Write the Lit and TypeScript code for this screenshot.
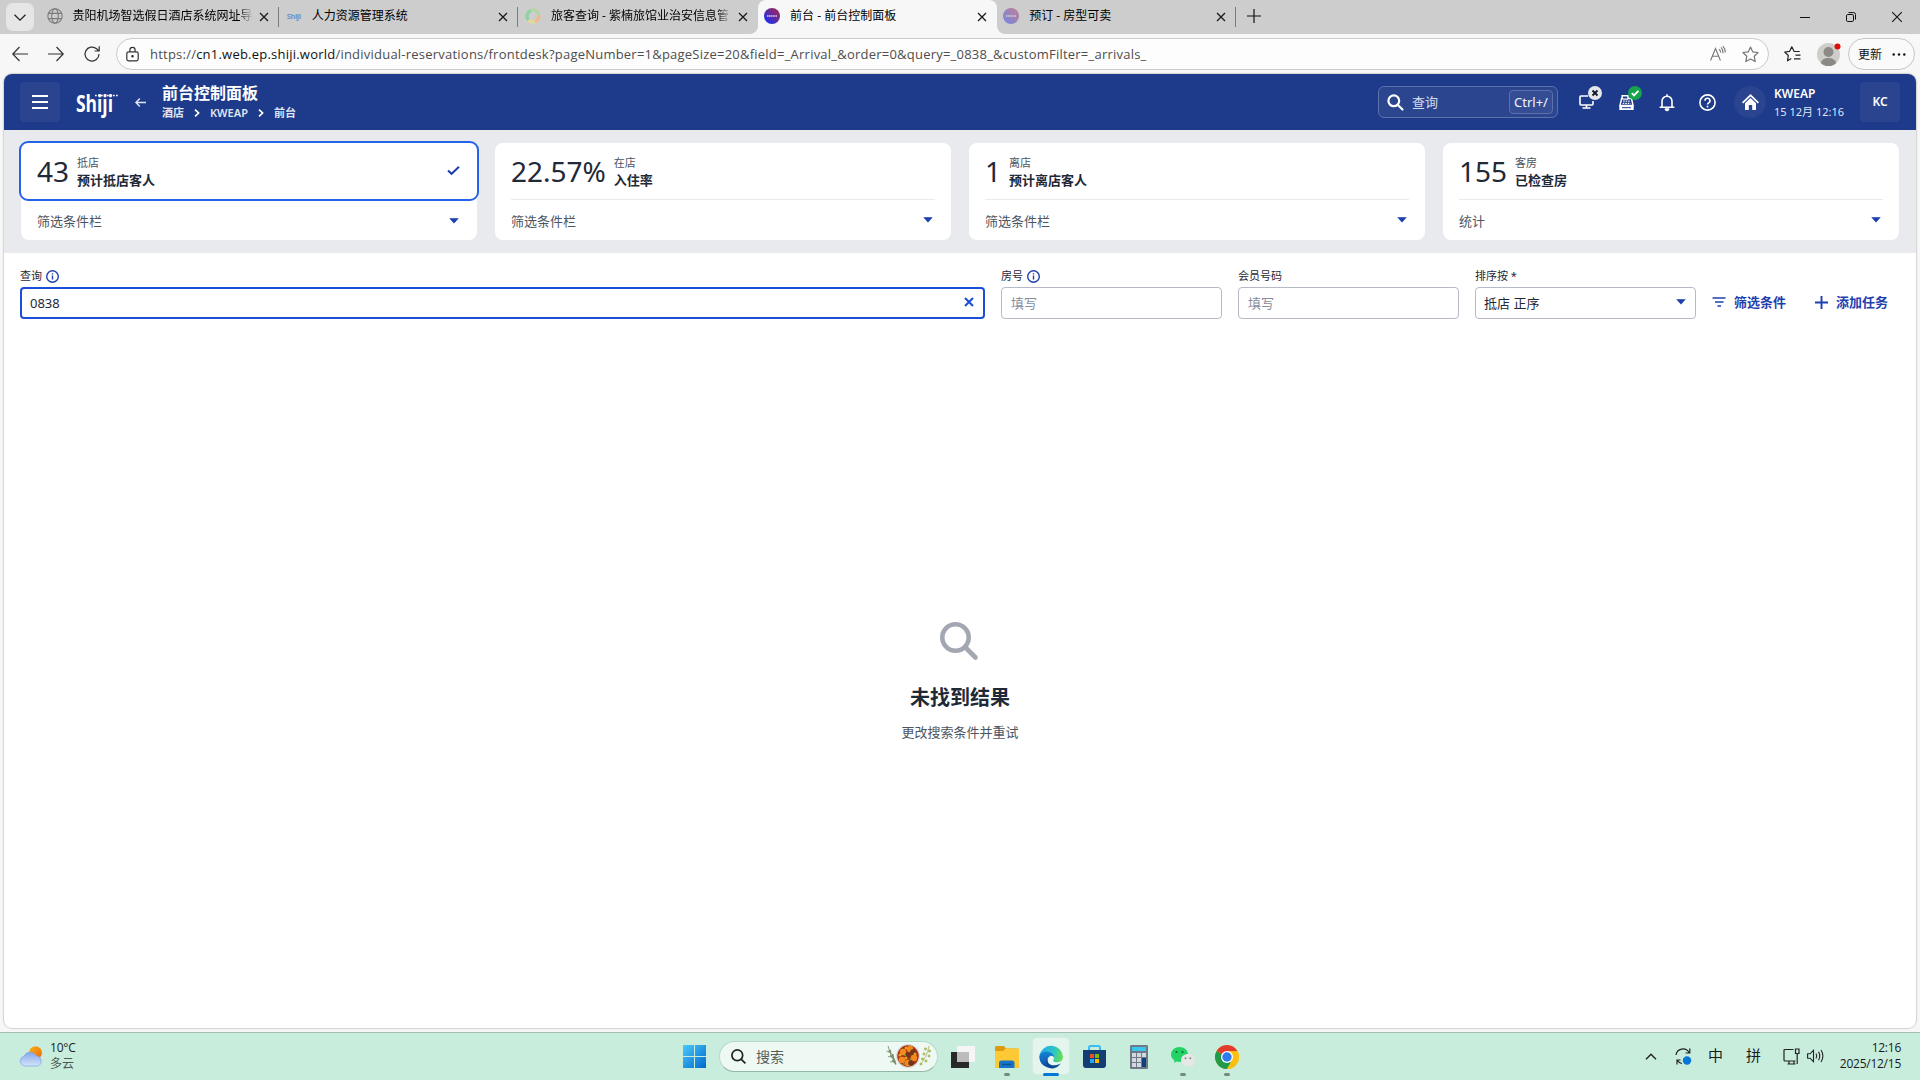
import { LitElement, html, svg, css, nothing } from "lit";
import { customElement, property } from "lit/decorators.js";
import { classMap } from "lit/directives/class-map.js";

const base = css`
  :host { display: block; box-sizing: border-box; font-family: "Noto Sans", "Noto Sans CJK SC", sans-serif; }
  * { box-sizing: border-box; }
  svg { display: block; flex: none; overflow: visible; }
`;

const closeX = (size: number, w: number, color = "#1a1a1a") => html`
  <svg width=${size} height=${size} viewBox="0 0 10 10" fill="none" stroke=${color} stroke-width=${w}>
    <path d="M1 1L9 9M9 1L1 9" />
  </svg>`;

const caret = html`
  <svg width="10" height="6" viewBox="0 0 10 6"><path d="M0.8 0.5H9.2L5 5.2Z" fill="#1e40af" stroke="#1e40af" stroke-width=".6" stroke-linejoin="round" /></svg>`;

const info = html`
  <svg width="13" height="13" viewBox="0 0 13 13" fill="none" stroke="#1e40af" stroke-width="1.4">
    <circle cx="6.5" cy="6.5" r="5.8" /><path d="M6.5 5.6V9.6M6.5 3.2V4.5" />
  </svg>`;

/* ---------- Browser tabs ---------- */
interface Tab { title: string; icon: "globe" | "shiji" | "ring" | "dot" | "dotfaded"; active?: boolean; }

@customElement("browser-tabs")
class BrowserTabs extends LitElement {
  static styles = [base, css`
    .bar { display: flex; height: 34px; background: #cdcdcd; padding-left: 6px; align-items: stretch; }
    .drop { width: 28px; height: 28px; margin-top: 3px; border-radius: 7px; background: #e6e6e6; display: grid; place-items: center; margin-right: 6px; }
    .tab { width: 239.2px; display: flex; align-items: center; padding-left: 6.5px; padding-right: 10px; position: relative; }
    .tab.active { background: #f7f7f7; border-radius: 8px 8px 0 0; }
    .tab.active::before, .tab.active::after { content: ""; position: absolute; bottom: 0; width: 8px; height: 8px; }
    .tab.active::before { left: -8px; background: radial-gradient(circle at 0 0, #cdcdcd 7.6px, #f7f7f7 8.2px); }
    .tab.active::after { right: -8px; background: radial-gradient(circle at 100% 0, #cdcdcd 7.6px, #f7f7f7 8.2px); }
    .fav { width: 16px; height: 16px; margin-right: 10px; margin-top: -2px; display: grid; place-items: center; flex: none; }
    .title { flex: 1; white-space: nowrap; font: 12px/18px "Open Sans", "Noto Sans CJK SC", sans-serif; color: #000; margin-top: -2px; margin-right: 5px; }
    .title.cut { -webkit-mask-image: linear-gradient(90deg, #000 166px, transparent 180px); mask-image: linear-gradient(90deg, #000 166px, transparent 180px); }
    .sep { width: 1px; height: 20px; background: #7c7c7c; margin: 7px 0 0 -1px; }
    .wordmark { font: bold 7.5px/10px "Open Sans", sans-serif; color: #6d8fd0; letter-spacing: -0.4px; }
    .plus { width: 36px; display: grid; place-items: center; margin-top: -3px; }
    .grow { flex: 1; }
    .win { width: 46px; display: grid; place-items: center; }
  `];
  tabs: Tab[] = [
    { title: "贵阳机场智选假日酒店系统网址导", icon: "globe" },
    { title: "人力资源管理系统", icon: "shiji" },
    { title: "旅客查询 - 紫楠旅馆业治安信息管", icon: "ring" },
    { title: "前台 - 前台控制面板", icon: "dot", active: true },
    { title: "预订 - 房型可卖", icon: "dotfaded" },
  ];
  favicon(kind: Tab["icon"]) {
    if (kind === "shiji") return html`<span class="wordmark">Shiji</span>`;
    if (kind === "globe") return html`
      <svg width="16" height="16" viewBox="0 0 16 16" fill="none" stroke="#7b7b7b" stroke-width="1.1">
        <circle cx="8" cy="8" r="7.2" /><ellipse cx="8" cy="8" rx="3.3" ry="7.2" /><path d="M1.4 5.4H14.6M1.4 10.6H14.6" />
      </svg>`;
    if (kind === "ring") return html`
      <svg width="16" height="16" viewBox="0 0 16 16" fill="none" stroke-width="3.2">
        <path d="M3.600 12A5.900 5.900 0 0 1 6 2.400" stroke="#8fd0a4" /><path d="M6 2.400A5.900 5.900 0 0 1 13.900 7.500" stroke="#b2d7a0" />
        <path d="M13.900 7.500A5.900 5.900 0 0 1 10 13.600" stroke="#efb987" /><path d="M10 13.600A5.900 5.900 0 0 1 3.600 12" stroke="#e3d896" />
      </svg>`;
    return html`
      <svg width="16" height="16" viewBox="0 0 16 16" opacity=${kind === "dot" ? 1 : 0.45}>
        <defs><linearGradient id="g" x1="0" y1="1" x2="1" y2="0"><stop offset=".1" stop-color="#1430f5" /><stop offset=".75" stop-color="#8b2673" /></linearGradient></defs>
        <circle cx="8" cy="8" r="8" fill="url(#g)" /><path d="M3 8H13" stroke="#d9c8ec" stroke-width="1.5" stroke-dasharray="1.4 .4" />
      </svg>`;
  }
  render() {
    return html`<div class="bar">
      <div class="drop"><svg width="12" height="7" viewBox="0 0 12 7" fill="none" stroke="#222" stroke-width="1.3"><path d="M.5 .8L6 6.2L11.5 .8" /></svg></div>
      ${this.tabs.map((t, i) => html`
        <div class=${classMap({ tab: true, active: !!t.active })}>
          <span class="fav">${this.favicon(t.icon)}</span>
          <span class=${classMap({ title: true, cut: i === 0 || i === 2 })}>${t.title}</span>
          ${closeX(10, 1.3)}
        </div>
        ${i === 2 || i === 3 ? nothing : html`<div class="sep"></div>`}`)}
      <div class="plus"><svg width="14" height="14" viewBox="0 0 14 14" stroke="#111" stroke-width="1.2"><path d="M7 0V14M0 7H14" /></svg></div>
      <div class="grow"></div>
      <div class="win"><svg width="10" height="10" stroke="#111"><path d="M0 5.500H10" /></svg></div>
      <div class="win"><svg width="10" height="10" viewBox="0 0 10 10" fill="none" stroke="#111"><rect x=".5" y="2.5" width="7" height="7" rx="1.3" /><path d="M2.5 .6H7.6A1.9 1.9 0 0 1 9.5 2.5V7.6" /></svg></div>
      <div class="win">${closeX(12, 0.9, "#111")}</div>
    </div>`;
  }
}

/* ---------- Browser toolbar ---------- */
@customElement("browser-toolbar")
class BrowserToolbar extends LitElement {
  static styles = [base, css`
    .bar { display: flex; align-items: center; height: 40px; background: #f7f7f7; padding: 0 4px 0 12px; }
    .nav { display: flex; gap: 20px; width: 104px; }
    .url { display: flex; align-items: center; width: 1653px; height: 32px; border: 1px solid #cacaca; border-radius: 16px; background: #fdfdfd; padding: 0 9px 0 9px; }
    .text { margin-left: 11px; flex: 1; font: 13px/20px "Open Sans", sans-serif; color: #4d4d4d; white-space: nowrap; letter-spacing: 0.225px; }
    .text b { font-weight: 400; color: #111; }
    .acts { display: flex; gap: 16px; align-items: center; }
    .fav { margin-left: 15px; }
    .user { margin-left: 16px; }
    .upd { margin-left: 8px; width: 67px; height: 32px; border: 1px solid #c6c6c6; border-radius: 16px; display: flex; align-items: center; justify-content: space-between; padding: 0 8px 0 9px; font: 12px/18px "Noto Sans CJK SC", sans-serif; color: #111; background: #fafafa; }
  `];
  render() {
    return html`<div class="bar">
      <div class="nav">
        <svg width="16" height="16" viewBox="0 0 16 16" fill="none" stroke="#333" stroke-width="1.2"><path d="M16 8H.8M7.5 1L.8 8L7.5 15" /></svg>
        <svg width="16" height="16" viewBox="0 0 16 16" fill="none" stroke="#333" stroke-width="1.2"><path d="M0 8H15.2M8.5 1L15.2 8L8.5 15" /></svg>
        <svg width="16" height="16" viewBox="0 0 16 16" fill="none" stroke="#333" stroke-width="1.2"><path d="M15 8A7 7 0 1 1 12.6 2.8L15 5M15.2 .3V5H10.6" /></svg>
      </div>
      <div class="url">
        <svg width="13" height="15" viewBox="0 0 13 15" fill="none" stroke="#333" stroke-width="1.2"><rect x=".8" y="4.8" width="11.4" height="9" rx="1.8" /><path d="M3.9 4.8V3A2.6 2.6 0 0 1 9.1 3V4.8" /><circle cx="6.5" cy="9.3" r=".7" fill="#333" /></svg>
        <span class="text">https://<b>cn1.web.ep.shiji.world</b>/individual-reservations/frontdesk?pageNumber=1&amp;pageSize=20&amp;field=_Arrival_&amp;order=0&amp;query=_0838_&amp;customFilter=_arrivals_</span>
        <div class="acts">
          <svg width="16" height="16" viewBox="0 0 16 16" fill="none" stroke="#777" stroke-width="1.1"><path d="M.6 14.5L5.5 2.5L10.4 14.5M2.3 10.3H8.7M9 3.2A4 4 0 0 1 10.6 6.6M11 1.400A7.5 7.5 0 0 1 13 7.2M12.800 .2A9 9 0 0 1 15.4 6.500" /></svg>
          <svg width="17" height="17" viewBox="0 0 17 17" fill="none" stroke="#777" stroke-width="1.2" stroke-linejoin="round"><path d="M8.5 1L10.8 5.9L16.1 6.5L12.2 10.2L13.2 15.6L8.5 12.9L3.8 15.6L4.8 10.2L.9 6.5L6.2 5.9Z" /></svg>
        </div>
      </div>
      <svg class="fav" width="17" height="16" viewBox="0 0 17 16" fill="none" stroke="#222" stroke-width="1.2" stroke-linejoin="round"><path d="M15.8 5.5L10 5.3L7.8 .8L5.6 5.3L.7 6L4.3 9.5L3.5 14.8L7.3 12.6M11.5 9.2H16.5M10 12.8H16.5" /></svg>
      <svg class="user" width="23" height="23" viewBox="0 0 23 23">
        <clipPath id="c"><circle cx="11.5" cy="11.5" r="11.5" /></clipPath>
        <circle cx="11.5" cy="11.5" r="11.5" fill="#cfcdca" /><g clip-path="url(#c)" fill="#8d8a86"><circle cx="11.5" cy="9" r="5" /><ellipse cx="11.5" cy="20" rx="7.5" ry="5" /></g>
        <circle cx="20.5" cy="3.5" r="3" fill="#e00b0b" />
      </svg>
      <div class="upd"><span>更新</span><svg width="14" height="3" fill="#111"><circle cx="1.7" cy="1.5" r="1.2" /><circle cx="7" cy="1.5" r="1.2" /><circle cx="12.3" cy="1.5" r="1.2" /></svg></div>
    </div>`;
  }
}

/* ---------- Application header ---------- */
@customElement("app-header")
class AppHeader extends LitElement {
  static styles = [base, css`
    .bar { height: 56px; background: #1e3a8a; color: #fff; display: flex; align-items: center; padding: 0 16px; }
    .box { width: 40px; height: 40px; border-radius: 4px; background: #2a448f; display: grid; place-items: center; font: 600 12px/16px "Noto Sans", sans-serif; }
    .logo { margin: -1px 0 0 16px; width: 43px; }
    .logo text { font: 700 23px "Open Sans", sans-serif; fill: #fff; }
    .arrow { margin-left: 16px; }
    .titles { margin-left: 16px; flex: 1; padding-bottom: 1px; }
    .title { font: 700 16px/20px "Noto Sans", "Noto Sans CJK SC", sans-serif; }
    .crumbs { display: flex; align-items: center; font: 600 11px/16px "Noto Sans", "Noto Sans CJK SC", sans-serif; color: #dfe5f5; margin-top: 2px; }
    .crumbs svg { margin: 1px 10px 0 10px; }
    .search { width: 180px; height: 32px; border: 1px solid #5c71ab; border-radius: 6px; background: #2b458f; display: flex; align-items: center; padding: 0 4px 0 8px; }
    .search span { margin-left: 8px; flex: 1; font-size: 13px; line-height: 18px; color: #d4dcf0; }
    .search kbd { width: 44px; height: 24px; border: 1px solid #5c71ab; border-radius: 4px; background: #344d95; font: 13px/22px "Noto Sans", sans-serif; text-align: center; color: #f2f4fa; }
    .icons { display: flex; align-items: center; margin: 0 4px 0 9px; }
    .ic { width: 40px; height: 40px; display: grid; place-items: center; position: relative; }
    .badge { position: absolute; left: 21px; top: 4px; }
    .home { width: 32px; height: 32px; border-radius: 50%; background: #2a448f; display: grid; place-items: center; margin-left: 3px; }
    .prop { margin-left: 8px; width: 86px; font-size: 11px; line-height: 18px; white-space: nowrap; color: #dfe5f5; padding-top: 1px; }
    .prop b { display: block; font-weight: 600; color: #fff; font-size: 12px; }
  `];
  render() {
    const chev = html`<svg width="6" height="8" viewBox="0 0 6 8" fill="none" stroke="#fff" stroke-width="1.7"><path d="M1 .6L4.6 4L1 7.4" /></svg>`;
    return html`<div class="bar">
      <div class="box"><svg width="16" height="14" stroke="#fff" stroke-width="2"><path d="M0 1H16M0 7H16M0 13H16" /></svg></div>
      <div class="logo"><svg width="43" height="28">
        <text x="0" y="24" textLength="37" lengthAdjust="spacingAndGlyphs">Shiji</text>
        <path d="M19 7.500H43" stroke="#fff" stroke-width="1.4" stroke-dasharray="1.7 1.3" />
      </svg></div>
      <svg class="arrow" width="11" height="9" viewBox="0 0 11 9" fill="none" stroke="#dfe5f5" stroke-width="1.5"><path d="M11 4.5H1M4.8 .6L1 4.5L4.8 8.4" /></svg>
      <div class="titles">
        <div class="title">前台控制面板</div>
        <div class="crumbs"><span>酒店</span>${chev}<span>KWEAP</span>${chev}<span>前台</span></div>
      </div>
      <div class="search">
        <svg width="17" height="17" viewBox="0 0 17 17" fill="none" stroke="#fff" stroke-width="2.2" stroke-linecap="round"><circle cx="6.8" cy="6.8" r="5.4" /><path d="M11 11L15.5 15.5" /></svg>
        <span>查询</span><kbd>Ctrl+/</kbd>
      </div>
      <div class="icons">
        <div class="ic">
          <svg width="16" height="14" viewBox="0 0 16 14" fill="none" stroke="#fff" stroke-width="1.6"><path d="M9 1H1.9Q1 1 1 2V9Q1 10 1.9 10H13.1Q14 10 14 9V6M7.5 10V13M3.5 13H11.5" /></svg>
          <svg class="badge" width="14" height="14"><circle cx="7" cy="7" r="7" fill="#e5e7eb" /><path d="M4.5 4.5L9.5 9.5M9.5 4.5L4.5 9.5" stroke="#111827" stroke-width="1.8" /></svg>
        </div>
        <div class="ic">
          <svg width="16" height="15" viewBox="0 0 16 15"><path d="M3.2 .8H9V3.600H12.5L14 10.400H1L2.6 3.600H3.200Z" fill="none" stroke="#fff" stroke-width="1.500" /><path d="M.3 10.300H14.700V15H.3Z" fill="#fff" /><path d="M3.500 4.200H9" stroke="#fff" stroke-width="1.200" /><path d="M4.200 6.200H11M3.800 8.400H11.600" stroke="#fff" stroke-width="1.200" stroke-dasharray="1.500 1" /><path d="M3 12.700H12" stroke="#1e3a8a" stroke-width="1" /></svg>
          <svg class="badge" width="14" height="14"><circle cx="7" cy="7" r="7" fill="#16a34a" /><path d="M3.8 7.2L6 9.4L10.4 4.8" stroke="#fff" stroke-width="1.9" fill="none" /></svg>
        </div>
        <div class="ic"><svg width="16" height="17" viewBox="0 0 16 17" fill="none" stroke="#fff" stroke-width="1.6"><path d="M.6 13.2H15.400M3 13V7.2A5 5 0 0 1 13 7.2V13M8 .3V2" /><path d="M6 14.8H10A2 2 0 0 1 6 14.8" fill="#fff" stroke-width="1" /></svg></div>
        <div class="ic"><svg width="17" height="17" viewBox="0 0 17 17" fill="none" stroke="#fff" stroke-width="1.6"><circle cx="8.5" cy="8.5" r="7.6" /><path d="M6 6.8A2.5 2.5 0 1 1 9.7 8.9Q8.5 9.6 8.5 10.6M8.5 11.8V13.4" /></svg></div>
      </div>
      <div class="home"><svg width="17" height="16" viewBox="0 0 17 16"><path d="M8.5 0L17 8.2L15.8 9.4L8.5 2.5L1.2 9.4L0 8.2Z" fill="#fff" /><path d="M8.5 4L14 9.2V16H10.2V11H6.8V16H3V9.2Z" fill="#fff" /></svg></div>
      <div class="prop"><b>KWEAP</b>15 12月 12:16</div>
      <div class="box">KC</div>
    </div>`;
  }
}

/* ---------- Statistic card ---------- */
@customElement("stat-card")
class StatCard extends LitElement {
  static styles = [base, css`
    .card { height: 97px; background: #fff; border-radius: 8px; display: flex; flex-direction: column; }
    .top { height: 57px; margin: 0 16px; padding-bottom: 1px; display: flex; align-items: center; border-bottom: 1px solid #e9eaee; }
    .top.sel { margin: -2px -2px 0; height: 60px; padding: 0 17px 1px 16px; border: 2px solid #2563eb; border-radius: 9px; background: #fff; }
    .num { font-size: 28px; line-height: 36px; color: #1f2937; margin-top: 1px; }
    .lab { margin-left: 8px; flex: 1; font-size: 11px; line-height: 16px; color: #4b5563; padding-top: 2px; }
    .lab b { display: block; font-size: 13px; line-height: 18px; color: #1f2937; font-weight: 600; }
    .bot { height: 40px; padding: 0 18px 0 16px; display: flex; align-items: center; justify-content: space-between; font-size: 13px; line-height: 18px; color: #4b5563; }
    .bot span { margin-top: 1px; }
    .sel + .bot { height: 39px; }
  `];
  @property() num = "";
  @property() over = "";
  @property() label = "";
  @property() foot = "";
  @property({ type: Boolean }) selected = false;
  render() {
    return html`<div class="card">
      <div class=${classMap({ top: true, sel: this.selected })}>
        <span class="num">${this.num}</span>
        <div class="lab">${this.over}<b>${this.label}</b></div>
        ${this.selected ? html`<svg width="13" height="9" viewBox="0 0 13 9" fill="none" stroke="#1e40af" stroke-width="2"><path d="M1 4.4L4.6 7.8L12 .8" /></svg>` : nothing}
      </div>
      <div class="bot"><span>${this.foot}</span>${caret}</div>
    </div>`;
  }
}

/* ---------- Filter form ---------- */
@customElement("filter-form")
class FilterForm extends LitElement {
  static styles = [base, css`
    .form { display: flex; padding: 15px 16px 0; gap: 16px; }
    .field { width: 221px; }
    .field.main { width: 965px; }
    .label { display: flex; align-items: center; gap: 4px; height: 16px; font-size: 11px; color: #1f2937; margin-bottom: 3px; line-height: 16px; }
    .input { height: 32px; border: 1px solid #b5b9c8; border-radius: 4px; display: flex; align-items: center; justify-content: space-between; padding: 0 11px 1px 9px; font-size: 13px; line-height: 18px; color: #868c9b; background: #fff; }
    .main .input { border: 2px solid #1d4ed8; color: #1f2937; padding-left: 8px; padding-right: 9.500px; }
    .input.sel { color: #1f2937; padding: 0 9px 1px 8px; }
    .input svg { margin-top: -1px; }
    .act { display: flex; align-items: center; margin-top: 18px; height: 31px; color: #1e40af; font-size: 13px; font-weight: 600; gap: 8px; white-space: nowrap; }
    .act svg { margin-top: 1px; }
    .act.add { margin-left: 13px; }
  `];
  render() {
    return html`<div class="form">
      <div class="field main"><div class="label">查询${info}</div><div class="input"><span>0838</span>${closeX(10, 2.1, "#1d4ed8")}</div></div>
      <div class="field"><div class="label">房号${info}</div><div class="input">填写</div></div>
      <div class="field"><div class="label">会员号码</div><div class="input">填写</div></div>
      <div class="field"><div class="label">排序按 *</div><div class="input sel"><span>抵店 正序</span>${caret}</div></div>
      <div class="act"><svg width="14" height="10" stroke="#1e40af" stroke-width="1.7"><path d="M.5 1H13.500M3 5H11.5M5.500 9H9" /></svg>筛选条件</div>
      <div class="act add"><svg width="13" height="13" stroke="#1e40af" stroke-width="1.9"><path d="M6.5 0V13M0 6.5H13" /></svg>添加任务</div>
    </div>`;
  }
}

/* ---------- Taskbar ---------- */
@customElement("task-bar")
class TaskBar extends LitElement {
  static styles = [base, css`
    .bar { height: 48px; background: #c8eddd; border-top: 1px solid #a3bdb2; display: flex; align-items: center; padding: 0 19px; color: #1b1b1b; font-size: 12px; }
    .weather { display: flex; gap: 7px; width: 664px; align-items: center; line-height: 16px; white-space: nowrap; font-family: "Open Sans", "Noto Sans CJK SC", sans-serif; padding-bottom: 1px; }
    .weather .temp { letter-spacing: -0.2px; }
    .weather .sky { color: #4c5a54; }
    .pill { width: 219px; height: 31px; margin-left: 13px; border-radius: 16px; background: #eef9f4; border: 1px solid #b5d9cb; border-bottom-color: #93b8a9; display: flex; align-items: center; padding: 0 5px 1px 11px; }
    .pill span { flex: 1; margin: -1px 0 0 10px; font: 14px/20px "Noto Sans CJK SC", sans-serif; color: #555f5b; }
    .apps { display: flex; margin-left: 3px; }
    .app { width: 44px; height: 47px; display: grid; place-items: center; position: relative; }
    .app.on::before { content: ""; position: absolute; left: 3px; right: 3px; top: 4px; bottom: 5px; border-radius: 5px; background: #e3f5ed; border: 1px solid #d6ebe2; }
    .app svg { position: relative; }
    .app.run::after, .app.on::after { content: ""; position: absolute; bottom: 4px; left: 19px; width: 6px; height: 3px; border-radius: 2px; background: #748a81; }
    .app.on::after { left: 14px; width: 16px; background: #0078d7; }
    .app.store { padding-right: 1px; }
    .grow { flex: 1; }
    .tray { display: flex; align-items: center; padding-bottom: 1px; }
    .ime { font: 15px/20px "Noto Sans CJK SC", sans-serif; margin: -2px 0 0 16px; }
    .ime + .ime { margin-left: 23px; }
    .sync { margin-left: 18px; }
    .net { margin-left: 22px; }
    .vol { margin-left: 7px; }
    .clock { width: 77px; text-align: right; font: 12px/16px "Open Sans", sans-serif; letter-spacing: -0.25px; }
  `];
  render() {
    const dots = (pts: number[][], c: string, r: number) => pts.map(([x, y]) => svg`<circle cx=${x} cy=${y} r=${r} fill=${c} />`);
    return html`<div class="bar">
      <div class="weather">
        <svg width="24" height="21" viewBox="0 0 24 21">
          <defs><linearGradient id="w" x1="0" y1="0" x2="0" y2="1"><stop offset="0" stop-color="#84a8e8" /><stop offset="1" stop-color="#d4e3fa" /></linearGradient><linearGradient id="s" x1="0" y1="0" x2="1" y2="1"><stop offset="0" stop-color="#f8b414" /><stop offset="1" stop-color="#f0640f" /></linearGradient></defs>
          <circle cx="16.5" cy="6.8" r="6.5" fill="url(#s)" /><path d="M5.5 20A5 5 0 0 1 4.8 10.3A7 7 0 0 1 17.3 9.8A5.3 5.3 0 0 1 18.8 20Z" fill="url(#w)" stroke="#7fa4e4" stroke-width=".7" />
        </svg>
        <div><div class="temp">10°C</div><div class="sky">多云</div></div>
      </div>
      <svg width="23" height="23" viewBox="0 0 23 23"><defs><linearGradient id="win" x1="0" y1="0" x2="1" y2="1"><stop offset="0" stop-color="#4bc9fb" /><stop offset="1" stop-color="#0069cb" /></linearGradient></defs><path d="M0 0H11V11H0ZM12 0H23V11H12ZM0 12H11V23H0ZM12 12H23V23H12Z" fill="url(#win)" /></svg>
      <div class="pill">
        <svg width="15" height="15" viewBox="0 0 15 15" fill="none" stroke="#222" stroke-width="1.7"><circle cx="6.3" cy="6.3" r="5.4" /><path d="M10.3 10.3L14.4 14.4" /></svg>
        <span>搜索</span>
        <svg width="46" height="26" viewBox="0 0 46 26">
          <g stroke="#708a63" fill="#7d9570" stroke-width=".8"><path d="M2 3Q4 12 10 22" fill="none" /><path d="M2.500 8L5 11L4.500 7ZM4 13L8 16L7 11ZM6 18L10 21L8.500 16ZM3 9L.5 8M4.500 14L2 13.500M7 18.500L4 19" /></g>
          <g stroke="#a9b45c" stroke-width=".8"><path d="M43 3Q41 14 34 22" fill="none" />${dots([[39.5, 6], [43.5, 8], [38, 11], [43, 13], [36.5, 16], [40, 18], [35, 21]], "#b6bd5f", 1.1)}</g>
          <circle cx="22" cy="13" r="12" fill="#d9dad6" /><circle cx="22" cy="13" r="10.7" fill="#ad2f12" />
          ${dots([[17, 9], [24, 6], [28, 15], [22, 20], [16, 17]], "#f28a1f", 3.2)}${dots([[22, 12], [25, 20], [27, 9]], "#70351c", 2.8)}${dots([[14, 12], [20, 5], [29, 11], [20, 15]], "#dba51d", 1.5)}${dots([[19, 12], [25, 16], [18, 21]], "#7eaa35", 1)}
        </svg>
      </div>
      <div class="apps">
        <div class="app"><svg width="24" height="22" viewBox="0 0 24 22"><path d="M0 6H18V22H0Z" fill="#292929" /><path d="M6 0H24V16H6Z" fill="#f5f5f5" /><path d="M6 6H18V16H6Z" fill="#bcbcbc" /></svg></div>
        <div class="app run"><svg width="24" height="22" viewBox="0 0 24 22"><path d="M0 1.5Q0 0 1.5 0H9L11 2.5H22.5Q24 2.5 24 4V20.5Q24 22 22.5 22H1.5Q0 22 0 20.5Z" fill="#dc9a0c" /><path d="M0 5H8L10.5 2.5H22.5Q24 2.5 24 4V20.5Q24 22 22.5 22H1.5Q0 22 0 20.5Z" fill="#fdc935" /><path d="M4 22V17Q4 14.5 6.5 14.5H17Q19.500 14.5 19.500 17V22Z" fill="#1675c7" /><path d="M7 18.5H16.500" stroke="#0c5396" stroke-width="1.4" /></svg></div>
        <div class="app on"><svg width="24" height="24" viewBox="0 0 24 24">
          <defs><linearGradient id="e1" x1="0" y1=".3" x2="1" y2=".5"><stop offset="0" stop-color="#25a9e8" /><stop offset=".6" stop-color="#2cc5c5" /><stop offset="1" stop-color="#6ade50" /></linearGradient><linearGradient id="e2" x1="0" y1="0" x2="0" y2="1"><stop offset="0" stop-color="#1584d8" /><stop offset="1" stop-color="#0c4aa0" /></linearGradient></defs>
          <path d="M.4 10A12 12 0 0 1 24 11.5C24 16 20.500 17.500 17.500 17.500S13.500 16.200 14.300 15C16 12 13.500 9 10 9C5 9 1.500 12 .4 10Z" fill="url(#e1)" />
          <path d="M.2 12C1 7 5.500 6 8.500 6.500C12 7 14.500 9 15 12C12 9.500 8.500 11.500 8.500 15C8.500 20 14 22.500 21.500 18.500A12 12 0 0 1 .2 12Z" fill="url(#e2)" />
          <path d="M8.600 14C8 19.500 14.500 23 21.800 18.300A12 12 0 0 1 13 24C6 22 6 15.500 8.600 14Z" fill="#083f83" opacity=".55" />
          <path d="M12 10.500A3.900 3.900 0 0 1 14.200 15.200C13.500 16.800 16 17.600 18 17.400C20 17.300 21 16.500 22 16.800C20 20 14 20.500 11.500 16.500C10.200 14.500 10.600 12 12 10.500Z" fill="#e9f8f4" />
        </svg></div>
        <div class="app store"><svg width="23" height="23" viewBox="0 0 23 23"><path d="M6 7V2.500Q6 1 7.500 1H15.500Q17 1 17 2.500V7" fill="none" stroke="#38bdf5" stroke-width="2" /><path d="M0 5H23V20Q23 23 20 23H3Q0 23 0 20Z" fill="#123e73" /><path d="M7 9H11V13H7Z" fill="#f25022" /><path d="M12 9H16V13H12Z" fill="#7fba00" /><path d="M7 14H11V18H7Z" fill="#21a8ef" /><path d="M12 14H16V18H12Z" fill="#ffb900" /></svg></div>
        <div class="app"><svg width="18" height="24" viewBox="0 0 18 24"><rect width="18" height="24" rx="1.200" fill="#6f7884" /><path d="M2 2H16V6H2Z" fill="#38c8ed" /><path d="M2 8H6V12H2ZM7 8H11V12H7ZM12 8H16V12H12ZM2 13H6V17H2ZM7 13H11V17H7ZM2 18H6V22H2ZM7 18H11V22H7Z" fill="#d3d9e0" /><path d="M12 13H16V22H12Z" fill="#0f3f7d" /></svg></div>
        <div class="app run"><svg width="24" height="22" viewBox="0 0 24 22"><path d="M8.500 1C13 1 17 4 17 8.500S13 16 8.500 16C7.500 16 6.500 15.900 5.600 15.600L3 17L3.500 14.500C1.500 13 0 11 0 8.500C0 4 4 1 8.500 1Z" fill="#23d366" /><path d="M17 8C21 8 24 10.700 24 14C24 16 23 17.500 21.500 18.700L22 21L19.500 19.700A9 9 0 0 1 17 20C13 20 10 17.400 10 14S13 8 17 8Z" fill="#e6e8e8" />${dots([[5.5, 6], [11.5, 6]], "#0f6b35", 1.1)}${dots([[14.5, 12.300], [19.300, 12.300]], "#888", 1)}</svg></div>
        <div class="app run"><svg width="24" height="24" viewBox="0 0 24 24"><circle cx="12" cy="12" r="12" fill="#fbbf12" /><path d="M12 12L1.600 6A12 12 0 0 0 12 24L17.200 15Z" fill="#219a4b" /><path d="M12 12L1.600 6A12 12 0 0 1 22.400 6H12Z" fill="#e33b2e" /><path d="M12 6H22.400A12 12 0 0 1 12 24L17.200 15Z" fill="#fbbf12" /><circle cx="12" cy="12" r="6" fill="#fff" /><circle cx="12" cy="12" r="4.700" fill="#2f7bee" /></svg></div>
      </div>
      <div class="grow"></div>
      <div class="tray">
        <svg width="12" height="7" viewBox="0 0 12 7" fill="none" stroke="#222" stroke-width="1.400"><path d="M1 6.200L6 1.200L11 6.200" /></svg>
        <svg class="sync" width="17" height="17" viewBox="0 0 17 17" fill="none" stroke="#222" stroke-width="1.200"><path d="M1 7A7 7 0 0 1 14 4.500M14.800 .5V5H10.500M2 16.500V12H5.500M2.500 12.500Q4 15 7 15.500" /><circle cx="12" cy="12.500" r="4.200" fill="#0878d8" stroke="none" /></svg>
        <span class="ime">中</span>
        <span class="ime">拼</span>
        <svg class="net" width="17" height="17" viewBox="0 0 17 17" fill="none" stroke="#222" stroke-width="1.200"><path d="M10.500 1.500H2Q1 1.500 1 2.500V12Q1 13 2 13H12.500M4.500 16H12.500M6 13V16M11 13V16M12.500 1H16V5.500H12.500ZM14.200 5.500V16" /></svg>
        <svg class="vol" width="17" height="14" viewBox="0 0 17 14" fill="none" stroke="#222" stroke-width="1.100"><path d="M.6 4.800H3L6.500 1.300V12.700L3 9.200H.6ZM9 4.500Q10.500 7 9 9.500M11.500 2.800Q14 7 11.500 11.200M14 1Q17.800 7 14 13" /></svg>
        <div class="clock"><div>12:16</div><div>2025/12/15</div></div>
      </div>
    </div>`;
  }
}

/* ---------- Root ---------- */
@customElement("app-root")
class AppRoot extends LitElement {
  static styles = [base, css`
    :host { width: 1920px; height: 1080px; overflow: hidden; }
    .screen { display: flex; flex-direction: column; width: 1920px; height: 1080px; background: #f7f7f7; }
    .page { flex: 1; margin: 0 4px 4px; border-radius: 8px; background: #fff; overflow: hidden; display: flex; flex-direction: column; box-shadow: 0 0 1px 1px #d2d2d2; }
    .stats { height: 123px; background: #e9eaee; padding: 13px 17px; display: grid; grid-template-columns: repeat(4, 1fr); gap: 18px; }
    .empty { flex: 1; display: flex; flex-direction: column; align-items: center; padding-top: 303px; }
    .empty svg { margin-right: 3px; }
    .empty h2 { margin: 24px 0 0; font: 700 20px/28px "Noto Sans", "Noto Sans CJK SC", sans-serif; color: #1f2937; }
    .empty p { margin: 10px 0 0; font-size: 13px; line-height: 20px; color: #4b5563; }
  `];
  render() {
    return html`<div class="screen">
      <browser-tabs></browser-tabs>
      <browser-toolbar></browser-toolbar>
      <div class="page">
        <app-header></app-header>
        <div class="stats">
          <stat-card selected num="43" over="抵店" label="预计抵店客人" foot="筛选条件栏"></stat-card>
          <stat-card num="22.57%" over="在店" label="入住率" foot="筛选条件栏"></stat-card>
          <stat-card num="1" over="离店" label="预计离店客人" foot="筛选条件栏"></stat-card>
          <stat-card num="155" over="客房" label="已检查房" foot="统计"></stat-card>
        </div>
        <filter-form></filter-form>
        <div class="empty">
          <svg width="38" height="38" viewBox="0 0 38 38" fill="none" stroke="#a3a7b1" stroke-width="4.600" stroke-linecap="round"><circle cx="15.500" cy="15.500" r="13.200" /><path d="M25 25L35.500 35.500" /></svg>
          <h2>未找到结果</h2>
          <p>更改搜索条件并重试</p>
        </div>
      </div>
      <task-bar></task-bar>
    </div>`;
  }
}
